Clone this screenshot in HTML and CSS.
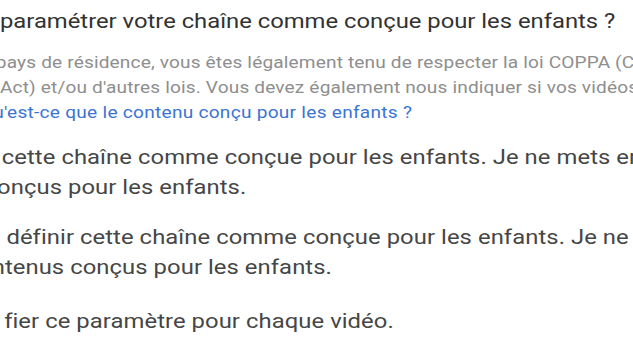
FILE: index.html
```html
<!DOCTYPE html>
<html lang="fr">
<head>
<meta charset="utf-8">
<title>Paramètres de la chaîne</title>
<link rel="stylesheet" href="styles.css">
</head>
<body>
<main class="sheet">
  <h1 class="title"><span class="ln ln-title">paramétrer votre chaîne comme conçue pour les enfants ?</span></h1>
  <div class="intro">
    <span class="ln ln-i1">pays de résidence, vous êtes légalement tenu de respecter la loi COPPA (Children's Online Privacy Protection</span>
    <span class="ln ln-i2">Act) et/ou d'autres lois. Vous devez également nous indiquer si vos vidéos sont</span>
    <span class="ln ln-i3"><a class="link" href="#">Qu'est-ce que le contenu conçu pour les enfants ?</a></span>
  </div>
  <div class="options">
    <div class="option">
      <span class="ln ln-a1">cette chaîne comme conçue pour les enfants. Je ne mets en ligne que des</span>
      <span class="ln ln-a2">conçus pour les enfants.</span>
    </div>
    <div class="option">
      <span class="ln ln-b1">s définir cette chaîne comme conçue pour les enfants. Je ne mets jamais</span>
      <span class="ln ln-b2">contenus conçus pour les enfants.</span>
    </div>
    <div class="option option-last">
      <span class="ln ln-c1">fier ce paramètre pour chaque vidéo.</span>
    </div>
  </div>
</main>
</body>
</html>
```
FILE: styles.css
```css
html, body {
  margin: 0;
  padding: 0;
  background: #ffffff;
  overflow: hidden;
}
body {
  width: 633px;
  height: 356px;
  font-family: Roboto, "Liberation Sans", Arial, sans-serif;
}
.sheet {
  padding-top: 5px;
  transform: scaleX(1.19);
  transform-origin: 0 0;
}
.ln {
  display: block;
  white-space: nowrap;
}
.title {
  margin: 0;
  font-size: 20px;
  line-height: 32px;
  font-weight: 400;
  color: #323232;
}
.intro {
  margin-top: 13px;
  font-size: 16px;
  line-height: 25px;
  letter-spacing: 0.14px;
  color: #8e8e8e;
}
.link {
  color: #3b74d4;
  text-decoration: none;
  letter-spacing: 0.24px;
}
.options {
  margin-top: 17px;
  font-size: 20px;
  line-height: 30px;
  letter-spacing: 0.06px;
  color: #464646;
}
.option + .option {
  margin-top: 20px;
}
.option + .option-last {
  margin-top: 24px;
}
.ln-title { text-indent: 0; }
.ln-i1 { text-indent: -3.5px; }
.ln-i2 { text-indent: 0; }
.ln-i3 { text-indent: -17px; }
.ln-a1 { text-indent: 1.5px; }
.ln-a2 { text-indent: -13px; }
.ln-b1 { text-indent: -10px; }
.ln-b2 { text-indent: -29px; }
.ln-c1 { text-indent: 3.5px; }
```
